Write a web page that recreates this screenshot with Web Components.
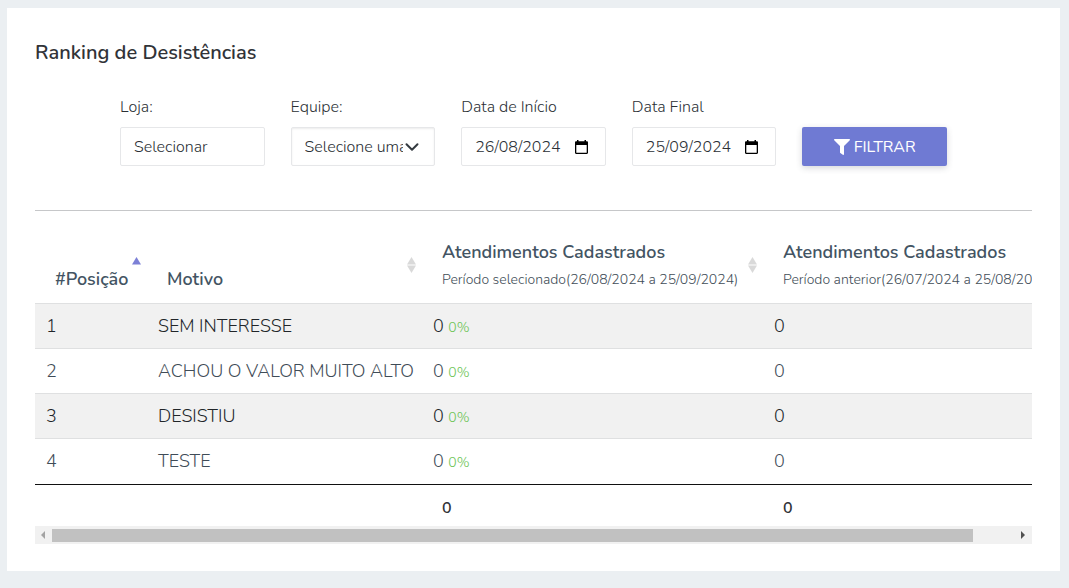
<!DOCTYPE html>
<html lang="pt-BR">
<head>
<meta charset="utf-8">
<meta name="viewport" content="width=device-width, initial-scale=1">
<title>Ranking de Desistências</title>
<style>
  body {
    margin: 0;
    padding: 8px 9px 17px 7px;
    background: #ebeff2;
    color: #313a46;
    font-family: Nunito, Lato, "Open Sans", sans-serif;
    font-size: 16px;
    font-weight: 300;
    line-height: 24px;
  }
</style>
</head>
<body>
<panel-card heading="Ranking de Desistências">
  <filter-bar>
    <filter-text label="Loja:" value="Selecionar"></filter-text>
    <filter-select label="Equipe:" option="Selecione uma equipe"></filter-select>
    <filter-date label="Data de Início" value="26/08/2024"></filter-date>
    <filter-date label="Data Final" value="25/09/2024"></filter-date>
    <filter-submit>FILTRAR</filter-submit>
  </filter-bar>
  <scroll-pane>
    <ranking-table></ranking-table>
  </scroll-pane>
</panel-card>

<script>
const fieldStyle = `
  *, *::before { box-sizing: border-box; }
  :host { display: block; min-width: 0; }
  label { display: block; height: 24px; margin-bottom: 8px; color: #2b3035; white-space: nowrap; }
  .box { position: relative; display: flex; align-items: center; height: 39px; border: 1px solid #e6e7e9; border-radius: 2px; background: #fff; }
  input, select { width: 100%; min-width: 0; height: 100%; margin: 0; padding: 0 13px; border: 0; outline: 0; background: transparent; color: #2b3035; font: inherit; }
`;

class Base extends HTMLElement {
  connectedCallback() {
    if (this.shadowRoot) return;
    this.attachShadow({ mode: 'open' }).innerHTML = this.view();
    this.ready?.();
  }
}

customElements.define('panel-card', class extends Base {
  view() {
    return `<style>
      :host { display: block; background: #fff; padding: 28px 28px 27px; }
      h1 { margin: 0 0 25px; font-size: 20px; line-height: 34px; font-weight: 600; color: #313338; }
    </style>
    <h1>${this.getAttribute('heading')}</h1><slot></slot>`;
  }
});

customElements.define('filter-bar', class extends Base {
  view() {
    return `<style>
      :host { display: grid; grid-template-columns: repeat(5, minmax(0, 1fr)); gap: 26px; align-items: end;
        padding: 0 85px 44px; border-bottom: 1px solid #c6c7c9; }
    </style><slot></slot>`;
  }
});

customElements.define('filter-text', class extends Base {
  view() {
    return `<style>${fieldStyle}</style>
    <label for="f">${this.getAttribute('label')}</label>
    <div class="box"><input id="f" type="text" value="${this.getAttribute('value')}"></div>`;
  }
});

customElements.define('filter-select', class extends Base {
  view() {
    return `<style>${fieldStyle}
      .box { box-shadow: inset 0 1px 2px rgba(0,0,0,.08); }
      select { appearance: none; padding: 0 31px 0 13px; }
      svg { position: absolute; right: 15px; pointer-events: none; }
    </style>
    <label for="f">${this.getAttribute('label')}</label>
    <div class="box"><select id="f"><option>${this.getAttribute('option')}</option></select>
      <svg width="14" height="14" viewBox="0 0 14 14" fill="none" stroke="#343a40" stroke-width="2" stroke-linecap="round" stroke-linejoin="round"><path d="M1.5 4.2 7 9.700l5.500-5.500"/></svg>
    </div>`;
  }
});

customElements.define('filter-date', class extends Base {
  view() {
    return `<style>${fieldStyle}
      input { flex: 1; padding: 0 0 0 13px; }
      button { display: flex; margin: 0 17px 0 0; padding: 0; border: 0; background: none; }
    </style>
    <label for="f">${this.getAttribute('label')}</label>
    <div class="box"><input id="f" type="text" inputmode="numeric" value="${this.getAttribute('value')}">
      <button type="button" aria-label="Abrir calendário"><svg width="13" height="14" viewBox="0 0 13 14"><path fill="#000" fill-rule="evenodd" d="M2 0h1.500v1.200h6V0H11v1.200h.8c.7 0 1.200.5 1.200 1.200v10.400c0 .7-.5 1.200-1.200 1.200H1.200C.5 14 0 13.500 0 12.800V2.400c0-.7.5-1.200 1.200-1.200H2zM1.300 5v7.700h10.400V5z"/></svg></button>
    </div>`;
  }
});

customElements.define('filter-submit', class extends Base {
  view() {
    return `<style>
      :host { display: block; }
      button { display: flex; align-items: center; justify-content: center; gap: 4px; width: 100%; height: 39px; padding: 0; border: 0; border-radius: 2px;
        background: #6f7ad3; color: #fff; font: inherit; font-weight: 400; box-shadow: 0 2px 6px rgba(50,58,70,.2); }
    </style>
    <button type="button"><svg width="16" height="16" viewBox="0 0 512 512" fill="#fff" aria-hidden="true"><path d="M488 0H24C2.700 0-8 25.900 7.100 41L192 225.900V432c0 7.800 3.800 15.200 10.200 19.700l80 56C298 518.700 320 507.500 320 488V225.900L504.900 41C520 25.900 509.300 0 488 0z"/></svg><slot></slot></button>`;
  }
});

customElements.define('sort-arrows', class extends Base {
  view() {
    const asc = this.hasAttribute('ascending');
    return `<style>
      :host { position: absolute; right: 6px; top: 46px; display: block; }
      svg { display: block; }
    </style>
    <svg width="9" height="16" viewBox="0 0 9 16"><path fill="${asc ? '#7c80d6' : '#d9d9d9'}" d="M4.500 0 9 7.500H0z"/>${asc ? '' : '<path fill="#d9d9d9" d="M0 8.500h9L4.500 16z"/>'}</svg>`;
  }
});

customElements.define('ranking-table', class extends Base {
  view() {
    const rows = ['SEM INTERESSE', 'ACHOU O VALOR MUITO ALTO', 'DESISTIU', 'TESTE'];
    return `<style>
      :host { display: block; width: max-content; }
      table { table-layout: fixed; width: 1042px; border-collapse: separate; border-spacing: 0; text-align: left; font-size: 18px; color: #3f4c57; }
      .pos { width: 112px; } .why { width: 275px; } .cur { width: 341px; }
      th, td { box-sizing: border-box; white-space: nowrap; }
      thead th { position: relative; height: 92px; padding: 0 20px 10px; vertical-align: bottom; line-height: 28px; font-weight: 600; color: #435463; }
      small { display: block; padding-top: 1px; font-size: 14px; line-height: 26px; font-weight: 300; color: #414d57; }
      tbody td { height: 45px; padding: 0 11px; border-top: 1px solid #dfe0e1; line-height: 24px; }
      tbody tr:nth-child(odd) td { background: #f1f1f1; color: #212529; }
      span { font-size: 14px; line-height: 16px; color: #6cc455; }
      tfoot td { height: 42px; padding: 4px 20px 0; border-top: 1px solid #111; font-size: 16px; font-weight: 600; color: #313338; }
      tbody tr:last-child td { height: 46px; padding-bottom: 1px; }
    </style>
    <table>
      <colgroup><col class="pos"><col class="why"><col class="cur"><col></colgroup>
      <thead><tr>
        <th scope="col" aria-sort="ascending">#Posição<sort-arrows ascending></sort-arrows></th>
        <th scope="col">Motivo<sort-arrows></sort-arrows></th>
        <th scope="col">Atendimentos Cadastrados<small>Período selecionado(26/08/2024 a 25/09/2024)</small><sort-arrows></sort-arrows></th>
        <th scope="col">Atendimentos Cadastrados<small>Período anterior(26/07/2024 a 25/08/2024)</small></th>
      </tr></thead>
      <tbody>${rows.map((r, i) => `<tr><td>${i + 1}</td><td>${r}</td><td>0 <span>0%</span></td><td>0</td></tr>`).join('')}</tbody>
      <tfoot><tr><td></td><td></td><td>0</td><td>0</td></tr></tfoot>
    </table>`;
  }
});

customElements.define('scroll-pane', class extends Base {
  view() {
    return `<style>
      :host { display: block; }
      .view { overflow-x: auto; scrollbar-width: none; }
      .bar { display: flex; height: 18px; background: #f1f1f1; }
      button { flex: none; display: grid; place-items: center; width: 17px; padding: 0; border: 0; background: none; }
      .track { flex: 1; min-width: 0; padding: 3px 0 2px; }
      .thumb { height: 13px; background: #c1c1c1; }
    </style>
    <div class="view"><slot></slot></div>
    <div class="bar">
      <button type="button" class="l" aria-label="Rolar para a esquerda"><svg width="5" height="8" viewBox="0 0 5 8"><path fill="#a3a3a3" d="M4 0v8L0 4z"/></svg></button>
      <div class="track"><div class="thumb"></div></div>
      <button type="button" class="r" aria-label="Rolar para a direita"><svg width="5" height="8" viewBox="0 0 5 8"><path fill="#505050" d="M0 0v8l4-4z"/></svg></button>
    </div>`;
  }
  ready() {
    const $ = s => this.shadowRoot.querySelector(s);
    const view = $('.view'), thumb = $('.thumb');
    const sync = () => {
      thumb.style.width = view.clientWidth / view.scrollWidth * 100 + '%';
      thumb.style.marginLeft = view.scrollLeft / view.scrollWidth * 100 + '%';
    };
    view.addEventListener('scroll', sync);
    $('.l').onclick = () => view.scrollBy(-40, 0);
    $('.r').onclick = () => view.scrollBy(40, 0);
    new ResizeObserver(sync).observe(view);
    sync();
  }
});
</script>
</body>
</html>
